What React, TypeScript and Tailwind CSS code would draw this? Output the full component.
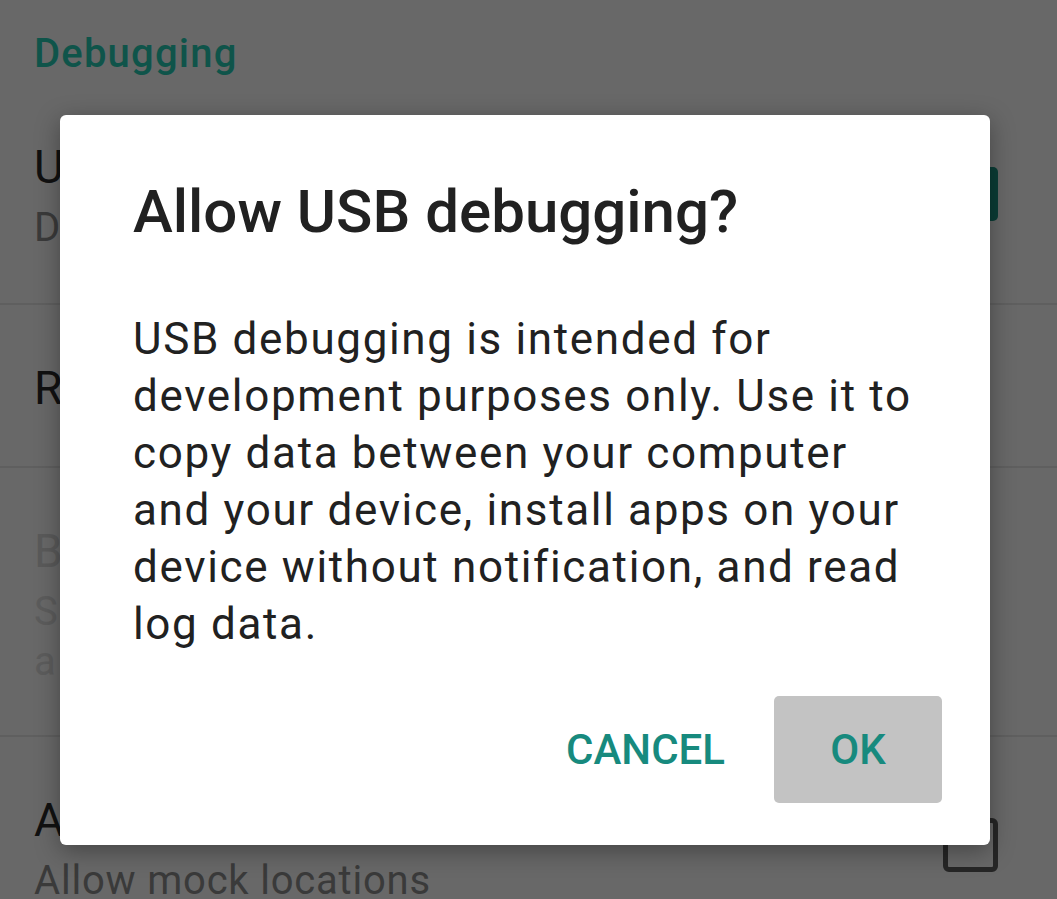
import React from "react";

interface Pref {
  title: string;
  summary?: string[];
  disabled?: boolean;
  check?: "on" | "off";
  height: string;
  divider?: boolean;
}

const prefs: Pref[] = [
  {
    title: "USB debugging",
    summary: ["Debug mode when USB is connected"],
    check: "on",
    height: "h-[221px]",
    divider: true,
  },
  {
    title: "Revoke USB debugging authorizations",
    height: "h-[163px]",
    divider: true,
  },
  {
    title: "Bug report shortcut",
    summary: ["Show a button in the power menu for", "a bug report"],
    disabled: true,
    height: "h-[269px]",
    divider: true,
  },
  {
    title: "Allow mock locations",
    summary: ["Allow mock locations"],
    check: "off",
    height: "h-[216px]",
  },
];

const PrefRow = ({ title, summary, disabled, check, height, divider }: Pref) => {
  return (
    <div
      className={`${height} flex items-start justify-between pl-[34px] pr-[59px] ${
        divider ? "border-b-2 border-[#5f5f5f]" : ""
      }`}
    >
      <div className="flex flex-col pt-[55px] whitespace-nowrap">
        <p className={`text-[46px] leading-[56px] ${disabled ? "text-[#5a5a5a]" : "text-[#111111]"}`}>{title}</p>
        {summary && (
          <div className="mt-[8px]">
            {summary.map((s) => (
              <p
                key={s}
                className={`text-[40px] leading-[50px] tracking-[0.8px] ${disabled ? "text-[#5c5c5c]" : "text-[#3a3a3a]"}`}
              >
                {s}
              </p>
            ))}
          </div>
        )}
      </div>
      {check && (
        <div className="self-center">
          {check === "on" ? (
            <div className="h-[54px] w-[56px] rounded-[5px] bg-[#0b3d36]"></div>
          ) : (
            <div className="h-[54px] w-[55px] rounded-[6px] border-[5px] border-[#262626]"></div>
          )}
        </div>
      )}
    </div>
  );
};

const App = () => {
  return (
    <div className="relative h-[899px] w-[1057px] overflow-hidden bg-[#686868] font-['Roboto',sans-serif]">
      <div className="flex flex-col">
        <div className="h-[84px] pl-[34px] pt-[32px]">
          <p className="text-[40px] font-medium leading-[44px] tracking-[1.2px] text-[#0f544a]">Debugging</p>
        </div>
        {prefs.map((p) => (
          <PrefRow key={p.title} {...p} />
        ))}
      </div>

      <div className="absolute left-[60px] top-[115px] flex h-[730px] w-[930px] flex-col rounded-[6px] bg-white pb-[42px] pl-[73px] pr-[48px] pt-[62px] shadow-[0_6px_24px_rgba(0,0,0,0.35)]">
        <h2 className="text-[60px] font-medium leading-[70px] text-[#212121]">Allow USB debugging?</h2>
        <p className="mt-[64px] whitespace-nowrap text-[44px] leading-[57px] tracking-[1.65px] text-[#212121]">
          USB debugging is intended for
          <br />
          development purposes only. Use it to
          <br />
          copy data between your computer
          <br />
          and your device, install apps on your
          <br />
          device without notification, and read
          <br />
          log data.
        </p>
        <div className="mt-auto flex justify-end gap-[23px]">
          <button className="h-[107px] min-w-[168px] rounded-[5px] px-[26px] text-[42px] font-medium text-[#178a7e]">
            CANCEL
          </button>
          <button className="h-[107px] min-w-[168px] rounded-[5px] bg-[#c3c3c3] px-[26px] text-[42px] font-medium text-[#178a7e]">
            OK
          </button>
        </div>
      </div>
    </div>
  );
};

export default App;
